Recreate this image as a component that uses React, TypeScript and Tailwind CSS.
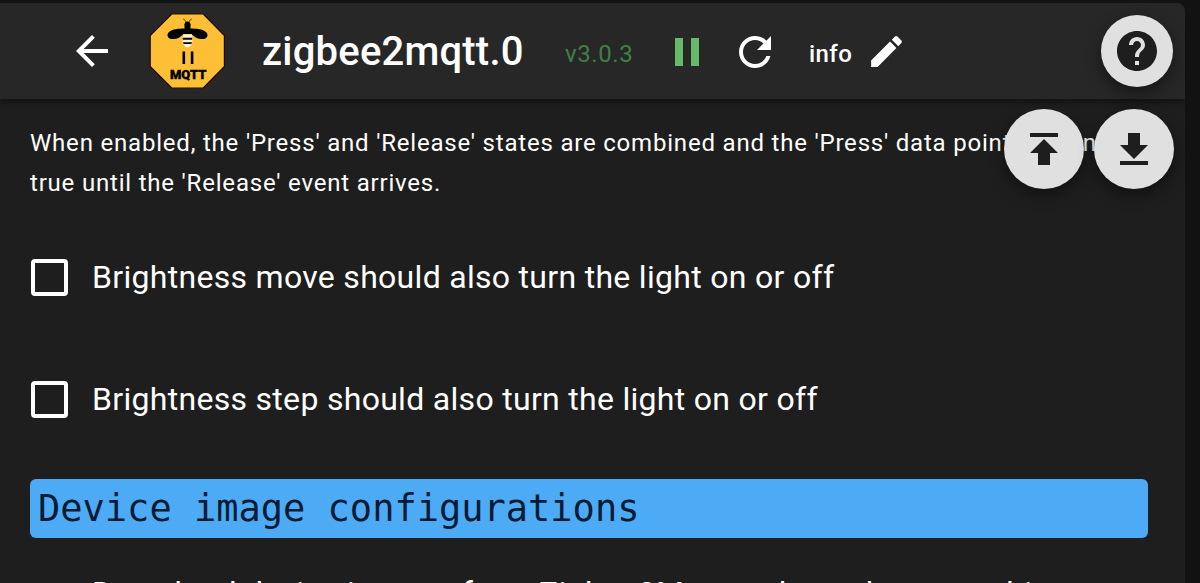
import React from 'react';

const MENU_TEXT =
  "When enabled, the 'Press' and 'Release' states are combined and the 'Press' data point remains true until the 'Release' event arrives.";

interface MdIconProps {
  path: string;
  className: string;
}

const MdIcon: React.FC<MdIconProps> = ({ path, className }) => (
  <svg viewBox="0 0 24 24" fill="currentColor" className={className} aria-hidden="true">
    <path d={path} />
  </svg>
);

const icons = {
  back: 'M20 11H7.83l5.59-5.59L12 4l-8 8 8 8 1.41-1.41L7.83 13H20v-2z',
  pause: 'M6 19h4V5H6v14zm8-14v14h4V5h-4z',
  refresh:
    'M17.65 6.35C16.2 4.9 14.21 4 12 4c-4.42 0-7.99 3.58-7.99 8s3.57 8 7.99 8c3.73 0 6.84-2.55 7.73-6h-2.08c-.82 2.33-3.04 4-5.65 4-3.31 0-6-2.69-6-6s2.69-6 6-6c1.66 0 3.14.69 4.22 1.78L13 11h7V4l-2.35 2.35z',
  edit: 'M3 17.25V21h3.75L17.81 9.94l-3.75-3.75L3 17.25zM20.71 7.04c.39-.39.39-1.02 0-1.41l-2.34-2.34a.9959.9959 0 0 0-1.41 0l-1.83 1.83 3.75 3.75 1.83-1.83z',
  help: 'M12 2C6.48 2 2 6.48 2 12s4.48 10 10 10 10-4.48 10-10S17.52 2 12 2zm1 17h-2v-2h2v2zm2.07-7.75l-.9.92C13.45 12.9 13 13.5 13 15h-2v-.5c0-1.1.45-2.1 1.17-2.83l1.24-1.26c.37-.36.59-.86.59-1.41 0-1.1-.9-2-2-2s-2 .9-2 2H8c0-2.21 1.79-4 4-4s4 1.79 4 4c0 .88-.36 1.68-.93 2.25z',
  publish: 'M5 4v2h14V4H5zm0 10h4v6h6v-6h4l-7-7-7 7z',
  download: 'M19 10h-4V4H9v6H5l7 7 7-7zM5 18v2h14v-2H5z',
};

const Logo: React.FC = () => (
  <svg viewBox="0 0 76 76" className="h-[76px] w-[76px] shrink-0">
    <path
      d="M23 .8h31L75.4 22.5v31L54 75.2H23L1.2 53.5v-31z"
      fill="#fdbf35"
      stroke="#1c0d00"
      strokeWidth="1.2"
    />
    <path d="M37 9.5c-.4-2-1.2-3-2.8-3.5M40 9.5c.4-2 1.2-3 2.8-3.5" fill="none" stroke="#3a2600" strokeWidth=".8" />
    {/* body and wings */}
    <ellipse cx="38.5" cy="11" rx="2.8" ry="2.6" />
    <path d="M35.5 11h6v4.5c6 0 12 .5 15.5 3.5 2.7 2.4 1.7 6.5-2.5 7-5 .6-9-1.7-12-5h-8c-3 3.3-7 5.6-12 5-4.2-.5-5.2-4.6-2.5-7 3.5-3 9.5-3.5 15.5-3.5z" />
    <path d="M34.2 21.5h8.6l.7 5.500c0 4-2 7-5 7.400-3-.4-5-3.400-5-7.400z" fill="#fff5d6" />
    <path d="M33.8 24.8h9.4v2h-9.4zM34 29.2h9l-.6 1.800h-7.800z" />
    <path d="M33.5 38.5h2.600V51h-2.600zM41.800 38.500h2.600V51h-2.600z" />
    <text
      x="39.2"
      y="66"
      textAnchor="middle"
      textLength="36.5"
      lengthAdjust="spacingAndGlyphs"
      fontSize="12.5"
      fontWeight="900"
      fontFamily="Roboto, sans-serif"
      stroke="#000"
      strokeWidth=".4"
    >
      MQTT
    </text>
  </svg>
);

const CheckboxRow: React.FC<{ label: string; className?: string }> = ({ label, className = '' }) => (
  <label className={`flex items-center ${className}`}>
    <span className="mr-[24px] ml-px h-[37px] w-[37px] shrink-0 rounded-[4px] border-4 border-white" />
    <span className="text-[32px] leading-[48px] tracking-[0.3px]">{label}</span>
  </label>
);

const App: React.FC = () => {
  return (
    <div className="relative h-[583px] w-[1200px] overflow-hidden bg-[#121212] pt-[3px] font-[Roboto,sans-serif] text-white">
      <div className="h-[580px] w-[1185px] overflow-hidden rounded-tr-[8px] bg-[#1e1e1e]">
        <header className="flex h-[96px] items-center bg-[#272727] shadow-[0_3px_6px_rgba(0,0,0,0.4)]">
          <MdIcon path={icons.back} className="ml-[68px] h-[48px] w-[48px] shrink-0" />
          <div className="ml-[33px] flex">
            <Logo />
          </div>
          <h1 className="mt-0.5 ml-[37px] w-[303px] whitespace-nowrap text-[40px] font-medium tracking-[0.2px]">
            zigbee2mqtt.0
          </h1>
          <span className="mt-1.5 w-[98px] text-[24px] tracking-[0.6px] text-[#3f8043]">v3.0.3</span>
          <MdIcon path={icons.pause} className="mt-px h-[48px] w-[48px] shrink-0 text-[#66bb6a]" />
          <MdIcon path={icons.refresh} className="mt-px ml-[20px] h-[48px] w-[48px] shrink-0" />
          <span className="mt-1.5 ml-[30px] w-[57px] text-[24px] font-medium tracking-[0.4px]">info</span>
          <MdIcon path={icons.edit} className="mt-px h-[41px] w-[41px] shrink-0" />
        </header>

        <main className="pl-[30px]">
          <p className="w-[1118px] pt-[24px] text-[24px] leading-[40px] tracking-[0.8px]">{MENU_TEXT}</p>
          <CheckboxRow label="Brightness move should also turn the light on or off" className="mt-[50px]" />
          <CheckboxRow label="Brightness step should also turn the light on or off" className="mt-[74px]" />
          <h2 className="mt-[56px] flex h-[59px] w-[1118px] items-center rounded-[6px] bg-[#4dabf5] pl-[8px] font-['DejaVu_Sans_Mono',monospace] text-[37px] text-[#051a33]">
            Device image configurations
          </h2>
          {/* two-line row, so the box sits below the first line */}
          <CheckboxRow
            label="Download device images from Zigbee2Mqtt and use them as a hint"
            className="mt-[31px] h-[96px] w-[1118px] [&>span:last-child]:self-start"
          />
        </main>
      </div>

      <button className="absolute top-[15px] left-[1101px] flex h-[72px] w-[72px] items-center justify-center rounded-full bg-[#e0e0e0] text-[#1e1e1e] shadow-[0_6px_16px_rgba(0,0,0,0.45)]">
        <MdIcon path={icons.help} className="h-[48px] w-[48px]" />
      </button>
      <button className="absolute top-[109px] left-[1004px] flex h-[80px] w-[80px] items-center justify-center rounded-full bg-[#e0e0e0] text-[#1e1e1e] shadow-[0_6px_16px_rgba(0,0,0,0.45)]">
        <MdIcon path={icons.publish} className="h-[48px] w-[48px]" />
      </button>
      <button className="absolute top-[109px] left-[1094px] flex h-[80px] w-[80px] items-center justify-center rounded-full bg-[#e0e0e0] text-[#1e1e1e] shadow-[0_6px_16px_rgba(0,0,0,0.45)]">
        <MdIcon path={icons.download} className="h-[48px] w-[48px]" />
      </button>
    </div>
  );
};

export default App;
